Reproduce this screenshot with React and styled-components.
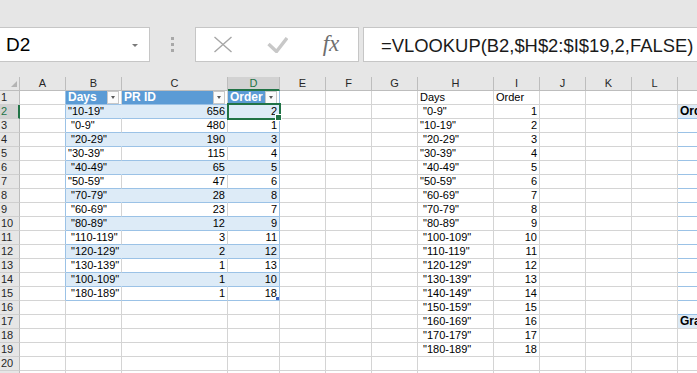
import React from 'react';
import styled, { createGlobalStyle } from 'styled-components';

const GlobalStyle = createGlobalStyle`
  html, body {
    margin: 0;
    padding: 0;
  }
  body {
    background: #e6e6e6;
    font-family: "Liberation Sans", Arial, sans-serif;
    overflow: hidden;
  }
`;

const GREEN = '#217346';
const GRID = '#d4d4d4';
const BAND = '#ddebf7';
const TABLE_LINE = '#9bc2e6';
const HEAD_BG = '#e6e6e6';

const COLUMNS = [
  { key: 'A', w: 46 },
  { key: 'B', w: 56 },
  { key: 'C', w: 106 },
  { key: 'D', w: 52 },
  { key: 'E', w: 46 },
  { key: 'F', w: 46 },
  { key: 'G', w: 46 },
  { key: 'H', w: 76 },
  { key: 'I', w: 46 },
  { key: 'J', w: 46 },
  { key: 'K', w: 46 },
  { key: 'L', w: 46 },
  { key: 'M', w: 60 },
];

const ROWS = Array.from({ length: 21 }, (_, i) => i + 1);

const TABLE = [
  ['"10-19"', 656, 2],
  [' "0-9"', 480, 1],
  [' "20-29"', 190, 3],
  ['"30-39"', 115, 4],
  [' "40-49"', 65, 5],
  ['"50-59"', 47, 6],
  [' "70-79"', 28, 8],
  [' "60-69"', 23, 7],
  [' "80-89"', 12, 9],
  [' "110-119"', 3, 11],
  [' "120-129"', 2, 12],
  [' "130-139"', 1, 13],
  [' "100-109"', 1, 10],
  [' "180-189"', 1, 18],
];

const LOOKUP = [
  [' "0-9"', 1],
  ['"10-19"', 2],
  [' "20-29"', 3],
  ['"30-39"', 4],
  [' "40-49"', 5],
  ['"50-59"', 6],
  [' "60-69"', 7],
  [' "70-79"', 8],
  [' "80-89"', 9],
  [' "100-109"', 10],
  [' "110-119"', 11],
  [' "120-129"', 12],
  [' "130-139"', 13],
  [' "140-149"', 14],
  [' "150-159"', 15],
  [' "160-169"', 16],
  [' "170-179"', 17],
  [' "180-189"', 18],
];

const Window = styled.div`
  width: 697px;
  height: 373px;
  overflow: hidden;
  background: #e6e6e6;
  display: flex;
  flex-direction: column;
`;

const FormulaRow = styled.div`
  display: flex;
  flex-shrink: 0;
  height: 35px;
  margin: 27px 0 15px;
`;

const NameBox = styled.div`
  box-sizing: border-box;
  width: 150px;
  display: flex;
  align-items: center;
  justify-content: space-between;
  padding: 1px 11px 0 6px;
  background: #fff;
  border: 1px solid #c6c6c6;
  border-left: none;
  font-size: 19px;
  color: #000;
`;

const DropArrow = styled.span`
  width: 0;
  height: 0;
  border-left: 3px solid transparent;
  border-right: 3px solid transparent;
  border-top: 3px solid #7a7a7a;
`;

const Grip = styled.div`
  width: 45px;
  display: flex;
  flex-direction: column;
  align-items: center;
  justify-content: center;
  gap: 3px;
`;

const GripDot = styled.span`
  width: 3px;
  height: 3px;
  background: #a8a8a8;
`;

const FuncBox = styled.div`
  box-sizing: border-box;
  width: 164px;
  margin-right: 4px;
  display: flex;
  background: #fff;
  border: 1px solid #c6c6c6;
`;

const FuncButton = styled.div`
  flex: 1;
  display: flex;
  align-items: center;
  justify-content: center;
`;

const FxLabel = styled.span`
  font-family: "Liberation Serif", "Times New Roman", serif;
  font-style: italic;
  font-size: 23px;
  color: #6e6e6e;
  margin-top: -1px;
`;

const FormulaBar = styled.div`
  box-sizing: border-box;
  flex: 1;
  margin-right: -20px;
  display: flex;
  align-items: center;
  padding: 2px 0 0 17px;
  background: #fff;
  border: 1px solid #c6c6c6;
  font-size: 18.4px;
  color: #1a1a1a;
  white-space: nowrap;
`;

const Sheet = styled.div`
  flex: 1;
  display: grid;
  grid-template-columns: ${p => p.$cols};
  grid-auto-rows: 14px;
  background: #fff;
  font-size: 11px;
  line-height: 13px;
`;

const Corner = styled.div`
  box-sizing: border-box;
  position: relative;
  background: ${HEAD_BG};
  border-right: 1px solid #bdbdbd;
  border-bottom: 1px solid #bdbdbd;

  &::after {
    content: '';
    position: absolute;
    right: 2px;
    bottom: 3px;
    width: 0;
    height: 0;
    border-left: 6px solid transparent;
    border-bottom: 6px solid #b4b4b4;
  }
`;

const ColHead = styled.div`
  box-sizing: border-box;
  text-align: center;
  font-size: 11px;
  line-height: 13px;
  background: ${p => (p.$active ? '#d2d2d2' : HEAD_BG)};
  color: ${p => (p.$active ? GREEN : '#262626')};
  border-right: 1px solid #bdbdbd;
  border-bottom: ${p => (p.$active ? `2px solid ${GREEN}` : '1px solid #bdbdbd')};
`;

const RowHead = styled.div`
  box-sizing: border-box;
  padding-left: 1px;
  font-size: 11px;
  line-height: 13px;
  background: ${p => (p.$active ? '#d2d2d2' : HEAD_BG)};
  color: ${p => (p.$active ? GREEN : '#262626')};
  border-right: ${p => (p.$active ? `2px solid ${GREEN}` : '1px solid #bdbdbd')};
  border-bottom: 1px solid #cfcfcf;
`;

const Cell = styled.div`
  box-sizing: border-box;
  position: relative;
  padding: 0 2px;
  white-space: pre;
  text-align: ${p => p.$align || 'left'};
  background: ${p => p.$fill || '#fff'};
  color: #000;
  font-size: ${p => (p.$bold ? '12px' : '11px')};
  font-weight: ${p => (p.$bold ? 700 : 400)};
  border-right: 1px solid ${p => p.$right || GRID};
  border-bottom: 1px solid ${p => p.$bottom || GRID};
`;

const HeadCell = styled.div`
  box-sizing: border-box;
  display: flex;
  padding-right: 2px;
  background: #fff;
  border-right: 1px solid ${p => p.$right || GRID};
  border-bottom: 1px solid ${TABLE_LINE};
`;

const HeadLabel = styled.div`
  flex: 1;
  padding-left: 2px;
  background: #5b9bd5;
  color: #fff;
  font-size: 12px;
  font-weight: 700;
`;

const FilterButton = styled.div`
  box-sizing: border-box;
  width: 12px;
  display: flex;
  align-items: center;
  justify-content: center;
  background: #fbfbfb;
  border: 1px solid #c8c8c8;

  &::after {
    content: '';
    width: 0;
    height: 0;
    border-left: 2.5px solid transparent;
    border-right: 2.5px solid transparent;
    border-top: 3px solid #595959;
  }
`;

const Selection = styled.span`
  position: absolute;
  top: -2px;
  left: -1px;
  right: -2px;
  bottom: -2px;
  border: 2px solid ${GREEN};
  z-index: 2;
  pointer-events: none;
`;

const FillHandle = styled.span`
  position: absolute;
  right: -3px;
  bottom: -3px;
  box-sizing: border-box;
  width: 7px;
  height: 7px;
  background: ${GREEN};
  border: 1px solid #fff;
  z-index: 3;
`;

const ResizeHandle = styled.span`
  position: absolute;
  right: 0;
  bottom: 0;
  width: 3px;
  height: 3px;
  background: #3c64c4;
`;

const CloseIcon = () => (
  <svg width="20" height="17" viewBox="0 0 20 17">
    <path d="M1.5 1 L18.5 16 M18.5 1 L1.5 16" stroke="#a6a6a6" strokeWidth="1.4" fill="none" />
  </svg>
);

const CheckIcon = () => (
  <svg width="21" height="16" viewBox="0 0 21 16">
    <polyline points="1.5,7 9.5,14.5 20,1" stroke="#c8c8c8" strokeWidth="3.4" fill="none" />
  </svg>
);

const HEADERS = { B: 'Days', C: 'PR ID', D: 'Order' };

function renderCell(r, key) {
  const id = `${key}${r}`;
  const inTable = ['B', 'C', 'D'].includes(key) && r <= 15;

  if (inTable && r === 1) {
    return (
      <HeadCell key={id} $right={key === 'D' ? TABLE_LINE : undefined}>
        <HeadLabel>{HEADERS[key]}</HeadLabel>
        <FilterButton />
      </HeadCell>
    );
  }

  if (inTable) {
    const [days, count, order] = TABLE[r - 2];
    const banded = r % 2 === 0;
    const fill = banded ? BAND : undefined;
    const right = key === 'D' ? TABLE_LINE : banded ? BAND : undefined;
    const text = key === 'B' ? days : key === 'C' ? count : order;
    return (
      <Cell key={id} $fill={fill} $right={right} $bottom={TABLE_LINE} $align={key === 'B' ? 'left' : 'right'}>
        {text}
        {id === 'D2' && (
          <>
            <Selection />
            <FillHandle />
          </>
        )}
        {id === 'D15' && <ResizeHandle />}
      </Cell>
    );
  }

  if (key === 'A' && r <= 15) {
    return <Cell key={id} $right={TABLE_LINE} />;
  }

  if (key === 'H' || key === 'I') {
    if (r === 1) return <Cell key={id}>{key === 'H' ? 'Days' : 'Order'}</Cell>;
    const row = LOOKUP[r - 2];
    if (row) {
      return key === 'H' ? <Cell key={id}>{row[0]}</Cell> : <Cell key={id} $align="right">{row[1]}</Cell>;
    }
  }

  if (key === 'M') {
    if (r === 2) return <Cell key={id} $fill={BAND} $bold $bottom={TABLE_LINE}>Order</Cell>;
    if (r === 17) return <Cell key={id} $fill={BAND} $bold>Grand Total</Cell>;
    if (r >= 3 && r <= 16) return <Cell key={id} $bottom={TABLE_LINE} />;
  }

  return <Cell key={id} />;
}

export default function App() {
  const cols = ['20px', ...COLUMNS.map(c => `${c.w}px`)].join(' ');

  return (
    <Window>
      <GlobalStyle />
      <FormulaRow>
        <NameBox>
          <span>D2</span>
          <DropArrow />
        </NameBox>
        <Grip>
          <GripDot />
          <GripDot />
          <GripDot />
        </Grip>
        <FuncBox>
          <FuncButton><CloseIcon /></FuncButton>
          <FuncButton><CheckIcon /></FuncButton>
          <FuncButton><FxLabel>fx</FxLabel></FuncButton>
        </FuncBox>
        <FormulaBar>=VLOOKUP(B2,$H$2:$I$19,2,FALSE)</FormulaBar>
      </FormulaRow>
      <Sheet $cols={cols}>
        <Corner />
        {COLUMNS.map(c => (
          <ColHead key={c.key} $active={c.key === 'D'}>{c.key}</ColHead>
        ))}
        {ROWS.map(r => (
          <React.Fragment key={r}>
            <RowHead $active={r === 2}>{r}</RowHead>
            {COLUMNS.map(c => renderCell(r, c.key))}
          </React.Fragment>
        ))}
      </Sheet>
    </Window>
  );
}
